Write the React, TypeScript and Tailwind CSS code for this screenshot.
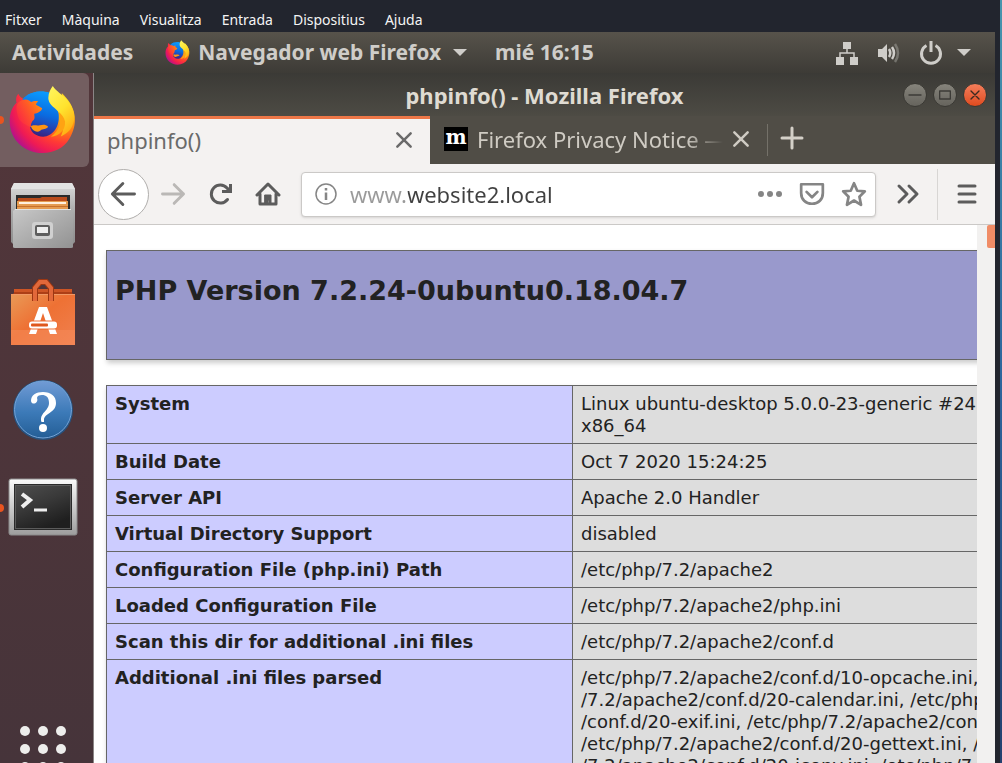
import type { ReactNode } from "react";

const menuItems = ["Fitxer", "Màquina", "Visualitza", "Entrada", "Dispositius", "Ajuda"];

const infoRows: [string, string[]][] = [
  ["System", ["Linux ubuntu-desktop 5.0.0-23-generic #24~18.04.1-Ubuntu SMP", "x86_64"]],
  ["Build Date", ["Oct 7 2020 15:24:25"]],
  ["Server API", ["Apache 2.0 Handler"]],
  ["Virtual Directory Support", ["disabled"]],
  ["Configuration File (php.ini) Path", ["/etc/php/7.2/apache2"]],
  ["Loaded Configuration File", ["/etc/php/7.2/apache2/php.ini"]],
  ["Scan this dir for additional .ini files", ["/etc/php/7.2/apache2/conf.d"]],
  [
    "Additional .ini files parsed",
    [
      "/etc/php/7.2/apache2/conf.d/10-opcache.ini, /etc/php",
      "/7.2/apache2/conf.d/20-calendar.ini, /etc/php/7.2/apache2",
      "/conf.d/20-exif.ini, /etc/php/7.2/apache2/conf.d",
      "/etc/php/7.2/apache2/conf.d/20-gettext.ini, /etc/php",
      "/7.2/apache2/conf.d/20-iconv.ini, /etc/php/7.2/apache2",
    ],
  ],
];

function FirefoxLogo({ id, className }: { id: string; className: string }) {
  return (
    <svg viewBox="28 46 202 206" className={className} aria-hidden="true">
      <defs>
        <radialGradient id={id + "body"} gradientUnits="userSpaceOnUse" cx="205" cy="85" r="200">
          <stop offset="0" stopColor="#ffe226" />
          <stop offset="0.3" stopColor="#ffb011" />
          <stop offset="0.5" stopColor="#ff7a16" />
          <stop offset="0.68" stopColor="#ff3a35" />
          <stop offset="0.85" stopColor="#ee1a55" />
          <stop offset="1" stopColor="#b5128a" />
        </radialGradient>
        <linearGradient id={id + "globe"} x1="0.6" y1="0" x2="0.4" y2="1">
          <stop offset="0" stopColor="#0a9cff" />
          <stop offset="0.5" stopColor="#0a6be0" />
          <stop offset="0.8" stopColor="#2b3ba8" />
          <stop offset="1" stopColor="#3a1f78" />
        </linearGradient>
        <linearGradient id={id + "face"} x1="0" y1="0.6" x2="1" y2="0">
          <stop offset="0" stopColor="#fb2a43" />
          <stop offset="0.5" stopColor="#ff5c25" />
          <stop offset="1" stopColor="#ff9a0a" />
        </linearGradient>
        <linearGradient id={id + "flame"} x1="0.2" y1="0" x2="0.7" y2="1">
          <stop offset="0" stopColor="#fff45a" />
          <stop offset="0.5" stopColor="#ffe32e" />
          <stop offset="1" stopColor="#ffab12" />
        </linearGradient>
      </defs>
      <path d="M68 90C86 68 108 64 135 65C158 66 172 80 182 100L180 165L90 165Z" fill={`url(#${id}globe)`} />
      <path
        d="M56 71C48 80 49 91 51 98C36 113 30 132 30 154C30 211 76 250 129 250C165 250 194 234 210 207C222 187 229 163 226 139C223 109 205 87 187 69C188 80 191 86 191 92L150 90L76 88C66 86 60 79 56 71Z"
        fill={`url(#${id}body)`}
      />
      <path
        d="M68 90C86 68 108 64 135 65C156 66 172 92 177 128C184 170 160 200 131 201C108 200 94 187 91 170L104 130L122 112L96 96Z"
        fill={`url(#${id}globe)`}
      />
      <path
        d="M56 98C70 85 88 86 94 97C100 93 108 92 116 94C111 99 108 104 109 108C117 109 124 111 128 115C126 125 113 130 104 132C104 138 107 145 103 150C97 155 93 162 94 172L70 160L58 148C52 130 46 110 56 98Z"
        fill={`url(#${id}face)`}
      />
      <path d="M94 170C101 163 112 169 121 166C130 164 139 163 146 171C140 180 130 176 123 182C113 190 99 184 94 170Z" fill="#ff9412" />
      <path
        d="M160 48C168 61 181 68 196 83C220 108 231 134 221 162C216 181 201 193 184 200C196 178 193 151 180 130C166 112 151 108 147 89C145 73 152 58 160 48Z"
        fill={`url(#${id}flame)`}
      />
      <path d="M177 126C188 152 181 183 154 201C181 199 199 179 197 155C194 143 187 133 177 126Z" fill="#ffa313" />
    </svg>
  );
}

function FilesIcon() {
  return (
    <svg viewBox="0 0 66 68" className="h-[68px] w-[66px]" aria-hidden="true">
      <defs>
        <linearGradient id="cabinet" x1="0" y1="0" x2="0" y2="1">
          <stop offset="0" stopColor="#dcdcdc" />
          <stop offset="0.5" stopColor="#a7a7a7" />
          <stop offset="1" stopColor="#8d8d8d" />
        </linearGradient>
        <linearGradient id="drawer" x1="0" y1="0" x2="1" y2="1">
          <stop offset="0" stopColor="#c8c8c8" />
          <stop offset="1" stopColor="#929292" />
        </linearGradient>
      </defs>
      <path d="M4 1H62L65 7V60L62 63H4L1 60V7Z" fill="url(#cabinet)" />
      <path d="M4 1H62L65 7H1Z" fill="#e3e3e3" />
      <rect x="6" y="13" width="54" height="16" fill="#2b2b2b" />
      <path d="M8 16H30L32 15H57V29H7Z" fill="#b94b1c" />
      <path d="M7 19H58V30H7Z" fill="#e59b50" />
      <path d="M9 20H56V22H9Z" fill="#fff0df" />
      <path d="M7 24H58V25H7Z" fill="#c8712e" />
      <path d="M5 27H61L63 29V65Q63 66 61 66H5Q3 66 3 65V29Z" fill="url(#drawer)" />
      <path d="M5 27.500H61" stroke="#e2e2e2" />
      <rect x="22" y="40" width="21" height="17" rx="3" fill="#d0d0d0" />
      <rect x="25" y="43" width="15" height="11" rx="2" fill="#5e5e5e" />
      <rect x="27" y="45" width="11" height="6" fill="#eee" />
    </svg>
  );
}

function SoftwareIcon() {
  return (
    <svg viewBox="0 0 66 68" className="h-[68px] w-[66px]" aria-hidden="true">
      <defs>
        <linearGradient id="bag" x1="0" y1="0" x2="1" y2="1">
          <stop offset="0" stopColor="#e99a57" />
          <stop offset="0.45" stopColor="#ee7134" />
          <stop offset="1" stopColor="#f08050" />
        </linearGradient>
      </defs>
      <path d="M4 10H62V14L65 17H1L4 14Z" fill="#ad3f16" />
      <path d="M4 10H62V13H4Z" fill="#ce5525" />
      <rect x="1" y="15" width="64" height="51" fill="url(#bag)" />
      <path d="M1 51H65V66H1Z" fill="#f68b5c" opacity="0.5" />
      <path d="M1 15.500H65" stroke="#f19965" />
      <path d="M25 22V9L30 3H36L41 9V22" fill="none" stroke="#9c3713" strokeWidth="6" />
      <path d="M25 22V9L30 3H36L41 9V22" fill="none" stroke="#e2683a" strokeWidth="4" />
      <path d="M29 28H37L47 55H40L38 49H28L26 55H19Z" fill="#fff" />
      <path d="M33 34L36 43H30Z" fill="#ed6c31" />
      <rect x="18" y="41.500" width="30" height="9" rx="4" fill="#ef7136" />
      <rect x="19" y="42.500" width="28" height="7" rx="3" fill="#fff" />
      <rect x="21" y="44.500" width="17" height="3" rx="1" fill="#df581d" />
    </svg>
  );
}

function HelpIcon() {
  return (
    <svg viewBox="0 0 62 62" className="h-[62px] w-[62px]" aria-hidden="true">
      <defs>
        <linearGradient id="help" x1="0" y1="0" x2="0" y2="1">
          <stop offset="0" stopColor="#719bd5" />
          <stop offset="0.55" stopColor="#3c7ab8" />
          <stop offset="1" stopColor="#245e96" />
        </linearGradient>
      </defs>
      <circle cx="31" cy="31" r="30" fill="#26527f" />
      <circle cx="31" cy="30.500" r="28.500" fill="url(#help)" stroke="#74a3d7" />
      <path
        d="M19 22C19 16 24 13 31 13C39 13 44 17 44 24C44 34 32 34 32 41V43H29.500C27 34 37 32 37 24C37 18 34 16 30 16C27 16 25 17 25 19C27 24 20 27 19 22Z"
        fill="#fff"
      />
      <circle cx="31" cy="49" r="4" fill="#fff" />
    </svg>
  );
}

function TerminalIcon() {
  return (
    <svg viewBox="0 0 70 58" className="h-[58px] w-[70px]" aria-hidden="true">
      <defs>
        <linearGradient id="frame" x1="0" y1="0" x2="0" y2="1">
          <stop offset="0" stopColor="#fafafa" />
          <stop offset="1" stopColor="#9d9d9d" />
        </linearGradient>
        <linearGradient id="screen" x1="0" y1="0" x2="0.5" y2="1">
          <stop offset="0" stopColor="#4e4e4e" />
          <stop offset="0.5" stopColor="#393939" />
          <stop offset="1" stopColor="#1f1f1f" />
        </linearGradient>
      </defs>
      <rect x="1" y="1" width="68" height="56" rx="2" fill="url(#frame)" stroke="#8c8c8c" />
      <rect x="6" y="6" width="58" height="46" fill="#2a2a2a" />
      <rect x="7.500" y="7.500" width="55" height="43" fill="url(#screen)" stroke="#5b5b5b" />
      <path d="M14 16L22 22L14 29" fill="none" stroke="#eee" strokeWidth="4" />
      <path d="M26 32H39" stroke="#eee" strokeWidth="3" />
    </svg>
  );
}

function DockItem({ label, active, running, children }: { label: string; active?: boolean; running?: boolean; children: ReactNode }) {
  return (
    <button
      type="button"
      aria-label={label}
      className={
        "relative flex h-[94px] w-full shrink-0 items-center justify-center rounded-r-md pr-1 pb-[2px] " +
        (active ? "bg-[#735e60]" : "")
      }
    >
      {running && <span className="absolute -left-1 top-[43px] size-2 rounded-full bg-[#e95420]" />}
      {children}
    </button>
  );
}

function Stroke({ className, d, width = 2 }: { className: string; d: string; width?: number }) {
  return (
    <svg viewBox="0 0 24 24" fill="none" stroke="currentColor" strokeWidth={width} strokeLinecap="round" strokeLinejoin="round" className={className} aria-hidden="true">
      <path d={d} />
    </svg>
  );
}

function TopPanel() {
  return (
    <header className="flex h-[41px] shrink-0 items-center bg-linear-to-b from-[#57534b] to-[#3d3b36] px-3 text-[21px] font-bold text-[#cfcdc9]">
      <button type="button">Actividades</button>
      <button type="button" className="ml-8 flex items-center gap-2">
        <FirefoxLogo id="panel" className="h-[25px] w-[25px]" />
        Navegador web Firefox
        <svg viewBox="0 0 14 7" className="ml-1 h-[7px] w-[14px] fill-current" aria-hidden="true"><path d="M0 0H14L7 7Z" /></svg>
      </button>
      <button type="button" className="ml-7">mié 16:15</button>
      <button type="button" aria-label="Sistema" className="ml-auto mr-3 flex items-center">
        <svg viewBox="0 0 24 24" className="mr-[18px] size-6" fill="currentColor" aria-hidden="true">
          <path d="M8 1H16V8H8ZM1 16H9V24H1ZM15 16H23V24H15Z" />
          <path d="M12 8V12M5 16V12H19V16" fill="none" stroke="currentColor" strokeWidth="1.500" />
        </svg>
        <svg viewBox="0 0 24 24" className="mr-[18px] size-6" fill="none" stroke="currentColor" strokeWidth="2.500" aria-hidden="true">
          <path d="M1 8H5L10 3V21L5 16H1Z" fill="currentColor" stroke="none" />
          <path d="M12 8Q14.500 12 12 16M15 6Q19 12 15 18" />
          <path d="M18 3Q24 12 18 21" opacity="0.35" />
        </svg>
        <svg viewBox="0 0 24 24" className="mr-[14px] size-6" fill="none" stroke="currentColor" strokeWidth="3" aria-hidden="true">
          <path d="M7.500 4.500A9.500 9.500 0 1 0 16.500 4.500M12 0V11" />
        </svg>
        <svg viewBox="0 0 14 7" className="h-[7px] w-[14px] fill-current" aria-hidden="true"><path d="M0 0H14L7 7Z" /></svg>
      </button>
    </header>
  );
}

function Dock() {
  return (
    <nav aria-label="Dock" className="flex w-[93px] shrink-0 flex-col gap-[3px] overflow-hidden bg-linear-to-b from-[#52363a] via-[#4d353a] to-[#46343a] pr-1">
      <DockItem label="Firefox" active running><FirefoxLogo id="dock" className="h-[69px] w-[67px]" /></DockItem>
      <DockItem label="Archivos"><FilesIcon /></DockItem>
      <DockItem label="Software de Ubuntu"><SoftwareIcon /></DockItem>
      <DockItem label="Ayuda"><HelpIcon /></DockItem>
      <DockItem label="Terminal" running><TerminalIcon /></DockItem>
      <button type="button" aria-label="Mostrar aplicaciones" className="-mb-[9px] mt-auto grid shrink-0 grid-cols-3 gap-2 self-center pr-1">
        {Array.from({ length: 9 }, (_, i) => (
          <span key={i} className="size-[10px] rounded-full bg-[#eeeeec]" />
        ))}
      </button>
    </nav>
  );
}

function TitleBar() {
  return (
    <div className="grid h-[43px] shrink-0 grid-cols-[1fr_auto_1fr] items-center bg-linear-to-b from-[#3b3a36] to-[#4d4b44] px-2">
      <h1 className="col-start-2 text-[22px] leading-7 font-bold text-[#dfdbd2]">phpinfo() - Mozilla Firefox</h1>
      <div className="flex justify-end gap-[6px]">
        <button type="button" aria-label="Minimizar" className="flex size-6 items-center justify-center rounded-full border border-[#3a3934] bg-linear-to-b from-[#86847c] to-[#66645d] text-[#3c3b37]">
          <Stroke className="size-4" d="M3 12H21" />
        </button>
        <button type="button" aria-label="Maximizar" className="flex size-6 items-center justify-center rounded-full border border-[#3a3934] bg-linear-to-b from-[#86847c] to-[#66645d] text-[#3c3b37]">
          <Stroke className="size-4" d="M4 6H20V18H4Z" />
        </button>
        <button type="button" aria-label="Cerrar" className="flex size-6 items-center justify-center rounded-full border border-[#3a3934] bg-linear-to-b from-[#f47d59] to-[#df4a1c] text-[#3c2a20]">
          <Stroke className="size-4" d="M6 6L18 18M18 6L6 18" />
        </button>
      </div>
    </div>
  );
}

function TabStrip() {
  return (
    <div className="flex h-12 shrink-0 bg-[#504d46] text-[22px] leading-7">
      <div className="flex w-[336px] items-center border-t-[3px] border-[#ee7748] bg-[#f4f2f1] pb-1 pl-[13px] pr-4 text-[#6a6a6a]">
        <button type="button" role="tab" aria-selected="true" className="flex-1 text-left">phpinfo()</button>
        <button type="button" aria-label="Cerrar pestaña"><Stroke className="size-5" d="M4 4L20 20M20 4L4 20" width={3} /></button>
      </div>
      <div className="my-2 flex w-[338px] items-center border-r border-[#747169] pb-[2px] pl-[14px] pr-4 text-[#cfcbc3]">
        <span className="mr-[9px] flex size-6 shrink-0 items-center justify-center bg-black font-['DejaVu_Serif',serif] text-[20px] leading-none font-bold text-white"><span className="-mt-1">m</span></span>
        <button type="button" role="tab" aria-selected="false" className="flex-1 overflow-hidden text-left whitespace-nowrap mask-r-from-85%">Firefox Privacy Notice —</button>
        <button type="button" aria-label="Cerrar pestaña" className="ml-2"><Stroke className="size-5" d="M4 4L20 20M20 4L4 20" width={3} /></button>
      </div>
      <button type="button" aria-label="Nueva pestaña" className="mb-1 ml-3 text-[#d4d0c8]"><Stroke className="size-6" d="M12 2V22M2 12H22" width={3} /></button>
    </div>
  );
}

function Toolbar() {
  return (
    <div className="flex h-[61px] shrink-0 items-center border-b border-[#cbc9c7] bg-[#f4f2f1] pl-1 pr-4 text-[#5c5c5c]">
      <button type="button" aria-label="Atrás" className="flex size-[51px] items-center justify-center rounded-full border border-[#b0aeac] bg-white">
        <Stroke className="size-7" d="M21 12H3M11 3L2 12L11 21" width={2.5} />
      </button>
      <button type="button" aria-label="Adelante" disabled className="ml-[10px] text-[#bab8b6]"><Stroke className="size-7" d="M3 12H21M13 4L21 12L13 20" width={2.5} /></button>
      <button type="button" aria-label="Recargar" className="ml-5">
        <svg viewBox="0 0 26 26" className="size-[26px]" fill="none" stroke="currentColor" strokeWidth="3" strokeLinecap="round" aria-hidden="true">
          <path d="M20.500 18.500A9 9 0 1 1 20 7" />
          <path d="M25 3V12H15V9H19L22 6V3Z" fill="currentColor" stroke="none" />
        </svg>
      </button>
      <button type="button" aria-label="Inicio" className="ml-[22px]">
        <svg viewBox="0 0 26 26" className="size-[26px]" fill="none" stroke="currentColor" strokeWidth="3" strokeLinecap="round" strokeLinejoin="round" aria-hidden="true">
          <path d="M2 14L13 3L24 14M5 13V23H21V13" />
          <path d="M10 14H16V23H14V19H13V23H10Z" fill="currentColor" strokeWidth="1" />
        </svg>
      </button>
      <div className="ml-5 flex h-[45px] min-w-0 flex-1 items-center rounded-sm border border-[#cbc9c7] bg-white px-3 text-[#858585] shadow-sm">
        <button type="button" aria-label="Información del sitio">
          <svg viewBox="0 0 24 24" className="size-6" fill="none" stroke="currentColor" aria-hidden="true">
            <circle cx="12" cy="12" r="10" strokeWidth="1.500" />
            <path d="M12 10.500V18M12 6V8.500" strokeWidth="2.500" />
          </svg>
        </button>
        <input
          aria-label="Dirección"
          defaultValue="www.website2.local"
          className="ml-3 min-w-0 flex-1 bg-[linear-gradient(to_right,#9a9a9a_58px,#404040_58px)] bg-clip-text text-[22px] leading-7 text-transparent outline-none"
        />
        <button type="button" aria-label="Acciones de página">
          <svg viewBox="0 0 26 26" className="size-[26px]" fill="currentColor" aria-hidden="true"><circle cx="4" cy="13" r="3" /><circle cx="13" cy="13" r="3" /><circle cx="22" cy="13" r="3" /></svg>
        </button>
        <button type="button" aria-label="Guardar en Pocket" className="ml-4"><Stroke className="size-[26px]" d="M2 3H22V11C22 17 18 21 12 21S2 17 2 11ZM7 10L12 15L17 10" width={2.5} /></button>
        <button type="button" aria-label="Marcador" className="ml-4 -mr-[4px]"><Stroke className="size-[26px]" d="M12 2L15 9L22 9.500L17 14.500L18.500 22L12 18L5.500 22L7 14.500L2 9.500L9 9Z" width={2.5} /></button>
      </div>
      <button type="button" aria-label="Más herramientas" className="ml-5"><Stroke className="size-6" d="M3 4L11 12L3 20M13 4L21 12L13 20" width={3} /></button>
      <span className="ml-[17px] h-[51px] w-px bg-[#d8d6d4]" />
      <button type="button" aria-label="Menú" className="ml-[17px]"><Stroke className="size-6" d="M4 4H20M4 12H20M4 20H20" width={3} /></button>
    </div>
  );
}

function PhpInfo() {
  return (
    <div className="flex min-h-0 flex-1 bg-white">
      <main className="min-w-0 flex-1 overflow-hidden pl-3 pt-[25px] font-['DejaVu_Sans',sans-serif] text-[18px] leading-[22px] text-[#222]">
        <div className="h-[110px] w-[1401px] border border-[#666] bg-[#9999cc] px-2 pt-6 shadow-[1px_3px_5px_#ccc]">
          <h2 className="text-[27px] leading-8 font-bold">PHP Version 7.2.24-0ubuntu0.18.04.7</h2>
        </div>
        <table className="mt-[25px] w-[1401px] table-fixed border-collapse shadow-[1px_3px_5px_#ccc]">
          <colgroup>
            <col className="w-[466px]" />
            <col />
          </colgroup>
          <tbody>
            {infoRows.map(([name, lines]) => (
              <tr key={name}>
                <th scope="row" className="border border-[#666] bg-[#ccccff] px-2 pt-[7px] pb-[6px] text-left align-top font-bold">{name}</th>
                <td className="border border-[#666] bg-[#dddddd] px-2 pt-[7px] pb-[6px] align-top whitespace-nowrap">
                  {lines.map((line) => (
                    <div key={line}>{line}</div>
                  ))}
                </td>
              </tr>
            ))}
          </tbody>
        </table>
      </main>
      <div className="flex w-[18px] shrink-0 justify-end bg-[#f2f1f0]">
        <div className="h-[23px] w-2 rounded-l-xs bg-[#f08c66]" />
      </div>
    </div>
  );
}

export default function App() {
  return (
    <div className="flex h-screen overflow-hidden bg-[#22252e] font-['Noto_Sans',sans-serif]">
      <div className="flex min-w-0 flex-1 flex-col">
        <div role="menubar" className="flex h-8 shrink-0 items-center gap-5 px-[5px] pt-2 text-[14px] leading-5 text-[#f4f4f4]">
          {menuItems.map((item) => (
            <button key={item} type="button" role="menuitem">{item}</button>
          ))}
        </div>
        <TopPanel />
        <div className="flex min-h-0 flex-1">
          <Dock />
          <section className="flex min-w-0 flex-1 flex-col border-l border-[#8b8686]">
            <TitleBar />
            <TabStrip />
            <Toolbar />
            <PhpInfo />
          </section>
        </div>
      </div>
      <div className="w-[5px] shrink-0" />
      <div className="w-[2px] shrink-0 bg-linear-to-b from-[#4795ad] via-[#2d659c] to-[#23416f]" />
    </div>
  );
}
